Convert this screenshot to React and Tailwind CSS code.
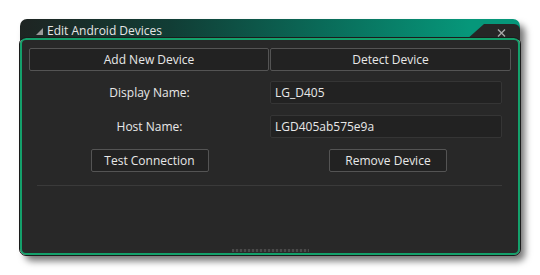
export default function App() {
  const font = { fontFamily: '"Open Sans", "Noto Sans", sans-serif' };

  return (
    <div className="w-[540px] h-[275px] bg-white pt-[19px] pl-[20px]" style={font}>
      <div className="relative w-[500px] h-[236px] flex flex-col rounded-[7px] shadow-[5px_6px_7px_rgba(0,0,0,0.55)]">
        {/* title bar */}
        <div className="relative h-[21px] shrink-0 rounded-t-[7px] bg-[linear-gradient(to_right,#1e2422_0%,#113d35_30%,#0a6a58_60%,#06977a_90%,#06977a_100%)] flex items-center pl-[16px] pt-[2px]">
          <svg width="7" height="7" viewBox="0 0 7 7" className="mr-[4px] mt-[1px]">
            <polygon points="7,0 7,7 0,7" fill="#9a9a9a" />
          </svg>
          <span className="text-[12px] text-[#e6e6e6] leading-none">Edit Android Devices</span>
          <div className="absolute right-0 top-[5px] w-[54px] h-[16px] bg-[#262626] rounded-tr-[6px] [clip-path:polygon(18px_0,100%_0,100%_100%,0_100%)]">
            <svg width="9" height="8" viewBox="0 0 9 8" className="absolute right-[14px] top-[5px]">
              <path d="M1 0.5 L8 7.5 M8 0.5 L1 7.5" stroke="#a8a8a8" strokeWidth="1.4" />
            </svg>
          </div>
        </div>

        {/* content */}
        <div className="relative flex-1 -mt-[2px] bg-[#282828] border-2 border-[#14a06b] rounded-[6px] outline outline-1 outline-[#1b1b1b] px-[7px] pt-[8px]">
          <div className="flex gap-[1px]">
            <button className="w-[240px] h-[23px] bg-[#222222] border border-[#545454] rounded-[2px] text-[12px] text-[#e8e8e8]">
              Add New Device
            </button>
            <button className="w-[241px] h-[23px] bg-[#222222] border border-[#545454] rounded-[2px] text-[12px] text-[#e8e8e8]">
              Detect Device
            </button>
          </div>

          <div className="grid grid-cols-[241px_232px] mt-[10px] gap-y-[11px] text-[12px] text-[#e8e8e8]">
            <div className="h-[23px] flex items-center justify-center">Display Name:</div>
            <div className="h-[23px] bg-[#222222] border border-[#353535] rounded-[2px] flex items-center pl-[4px]">LG_D405</div>
            <div className="h-[23px] flex items-center justify-center">Host Name:</div>
            <div className="h-[23px] bg-[#222222] border border-[#353535] rounded-[2px] flex items-center pl-[4px]">LGD405ab575e9a</div>
            <div className="h-[23px] flex items-center justify-center">
              <button className="w-[118px] h-[23px] bg-[#222222] border border-[#545454] rounded-[2px]">Test Connection</button>
            </div>
            <div className="h-[23px] flex items-center justify-start pl-[59px]">
              <button className="w-[118px] h-[23px] bg-[#222222] border border-[#545454] rounded-[2px]">Remove Device</button>
            </div>
          </div>

          <div className="mt-[13px] ml-[8px] w-[465px] h-px bg-[#3a3a3a]" />

          {/* resize grip */}
          <div className="absolute bottom-[1px] left-[210px] w-[77px] h-[3px] bg-[repeating-linear-gradient(to_right,#4a4a4a_0px,#4a4a4a_2px,#2e2e2e_2px,#2e2e2e_4px)]" />
        </div>
      </div>
    </div>
  );
}
